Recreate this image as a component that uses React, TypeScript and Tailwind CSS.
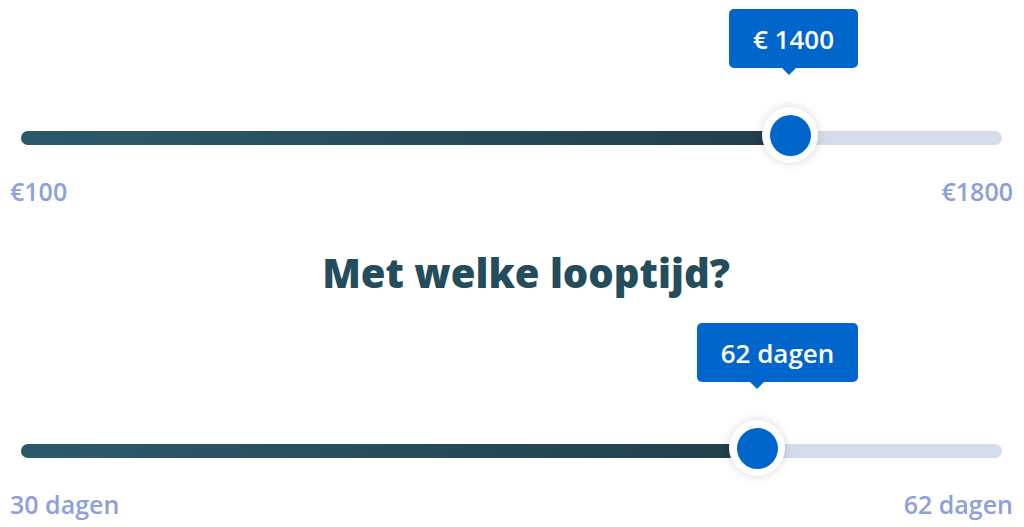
import React from "react";

type SliderProps = {
  thumbCenter: number;
  tooltipLeft: number;
  tooltipWidth: number;
  tooltipTop: number;
  label: string;
  min: string;
  max: string;
};

function Slider({ thumbCenter, tooltipLeft, tooltipWidth, tooltipTop, label, min, max }: SliderProps) {
  return (
    <div className="flex w-[981px] flex-col">
      <div className="relative h-[14px] w-[981px] rounded-full bg-[#d3dcea]">
        <div
          className="absolute left-0 top-0 h-[14px] rounded-l-full bg-gradient-to-r from-[#2c5a6b] to-[#213f4b]"
          style={{ width: thumbCenter }}
        />
        <div
          className="absolute top-[-24px] flex h-[56px] w-[56px] items-center justify-center rounded-full bg-white shadow-[0_0_10px_rgba(0,0,0,0.16)]"
          style={{ left: thumbCenter - 28 }}
        >
          <div className="h-[41px] w-[41px] rounded-full bg-[#0066cc]" />
        </div>
        <div
          className="absolute flex h-[59px] items-center justify-center rounded-[5px] bg-[#0066cc] text-[26px] font-semibold leading-none text-white"
          style={{ left: tooltipLeft, top: tooltipTop, width: tooltipWidth }}
        >
          {label}
          <div className="absolute bottom-[-7px] left-[53px] h-0 w-0 border-l-[7px] border-r-[7px] border-t-[7px] border-l-transparent border-r-transparent border-t-[#0066cc]" />
        </div>
      </div>
      <div className="-mx-[11px] mt-[30px] flex justify-between text-[25px] font-semibold leading-[32px] text-[#8da0dc]">
        <span>{min}</span>
        <span>{max}</span>
      </div>
    </div>
  );
}

export default function App() {
  return (
    <div className="h-[527px] w-[1024px] overflow-hidden bg-white pl-[21px] pt-[131px] font-['Open_Sans',sans-serif]">
      <Slider
        thumbCenter={769}
        tooltipLeft={708}
        tooltipWidth={129}
        tooltipTop={-122}
        label="€ 1400"
        min="€100"
        max="€1800"
      />
      <h2 className="mt-[44px] h-[44px] w-[981px] pl-[29px] text-center text-[40px] font-extrabold leading-[44px] text-[#234c5c]">
        Met welke looptijd?
      </h2>
      <div className="mt-[149px]">
        <Slider
          thumbCenter={736}
          tooltipLeft={676}
          tooltipWidth={161}
          tooltipTop={-121}
          label="62 dagen"
          min="30 dagen"
          max="62 dagen"
        />
      </div>
    </div>
  );
}
